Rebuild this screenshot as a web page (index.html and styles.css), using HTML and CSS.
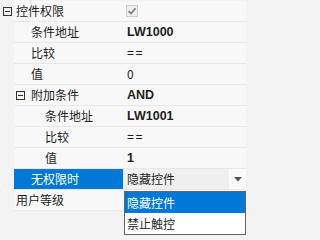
FILE: index.html
```html
<!DOCTYPE html>
<html>
<head>
<meta charset="utf-8">
<link rel="stylesheet" href="styles.css">
</head>
<body>
<div class="grid">
  <div class="row">
    <div class="gutter"><span class="tog"></span></div>
    <div class="name l0">控件权限</div>
    <div class="value"><span class="chk"><svg width="10" height="10" viewBox="0 0 10 10"><path d="M1.5 5.2 L4 7.6 L8.6 2.2" fill="none" stroke="#7a7a7a" stroke-width="1.6"/></svg></span></div>
  </div>
  <div class="row">
    <div class="gutter"></div>
    <div class="name l1">条件地址</div>
    <div class="value b">LW1000</div>
  </div>
  <div class="row">
    <div class="gutter"></div>
    <div class="name l1">比较</div>
    <div class="value eq">==</div>
  </div>
  <div class="row">
    <div class="gutter"></div>
    <div class="name l1">值</div>
    <div class="value">0</div>
  </div>
  <div class="row">
    <div class="gutter"></div>
    <div class="name l1t"><span class="tog"></span>附加条件</div>
    <div class="value b">AND</div>
  </div>
  <div class="row">
    <div class="gutter"></div>
    <div class="name l2">条件地址</div>
    <div class="value b">LW1001</div>
  </div>
  <div class="row">
    <div class="gutter"></div>
    <div class="name l2">比较</div>
    <div class="value eq">==</div>
  </div>
  <div class="row">
    <div class="gutter"></div>
    <div class="name l2">值</div>
    <div class="value b">1</div>
  </div>
  <div class="row">
    <div class="gutter"></div>
    <div class="name l1 sel">无权限时</div>
    <div class="value combo"><span class="ctext">隐藏控件</span><span class="cbtn"><svg width="8" height="5" viewBox="0 0 8 5"><path d="M0 0 H8 L4 4.5 Z" fill="#555"/></svg></span></div>
  </div>
  <div class="row">
    <div class="gutter"></div>
    <div class="name l0 top">用户等级</div>
    <div class="value"></div>
  </div>
</div>
<div class="drop">
  <div class="opt hi">隐藏控件</div>
  <div class="opt">禁止触控</div>
</div>
</body>
</html>
```
FILE: styles.css
```css
html, body {
  margin: 0;
  padding: 0;
  background: #f3f3f3;
  font-family: "Noto Sans CJK SC", "Microsoft YaHei", sans-serif;
  font-size: 12px;
  color: #1e1e1e;
}
body {
  width: 246px;
  height: 236px;
  overflow: hidden;
  position: relative;
}
.grid {
  display: flex;
  flex-direction: column;
  padding-top: 1px;
}
.row {
  display: flex;
  height: 20px;
  border-bottom: 1px solid #e8e8e8;
}
.gutter {
  width: 14px;
  flex: none;
  background: #f3f3f3;
  display: flex;
  align-items: center;
  padding-left: 3px;
  box-sizing: border-box;
  margin-bottom: -1px;
}
.name {
  width: 109px;
  flex: none;
  background: #f8f8f8;
  display: flex;
  align-items: center;
  box-sizing: border-box;
  line-height: 20px;
  white-space: nowrap;
}
.l0 { padding-left: 2px; }
.l1 { padding-left: 17px; }
.l1t { padding-left: 2px; }
.l1t .tog { margin-right: 6px; }
.l2 { padding-left: 31px; }
.sel {
  background: #0078d7;
  color: #fff;
}
.value {
  flex: 1;
  background: #f8f8f8;
  display: flex;
  align-items: center;
  padding-left: 4px;
  line-height: 20px;
  white-space: nowrap;
}
.b { font-weight: bold; font-family: "Liberation Sans", Arial, sans-serif; font-size: 12.5px; }
.eq { letter-spacing: 1.5px; font-family: "Liberation Sans", Arial, sans-serif; }
.tog {
  width: 9px;
  height: 9px;
  box-sizing: border-box;
  border: 1px solid #333;
  position: relative;
  flex: none;
}
.tog::after {
  content: "";
  position: absolute;
  left: 1px;
  right: 1px;
  top: 3px;
  height: 1px;
  background: #333;
}
.chk {
  width: 12px;
  height: 12px;
  box-sizing: border-box;
  border: 1px solid #cdcdcd;
  background: #f0f0f0;
  display: flex;
  align-items: center;
  justify-content: center;
  margin-left: -1px;
}
.combo {
  background: #f0f0f0;
  padding-right: 0;
}
.ctext { flex: 1; }
.cbtn {
  width: 17px;
  height: 20px;
  background: #fafafa;
  display: flex;
  align-items: center;
  justify-content: center;
}
.drop {
  position: absolute;
  left: 124px;
  top: 191px;
  width: 122px;
  height: 44px;
  box-sizing: border-box;
  border: 1px solid #646464;
  background: #fff;
}
.opt {
  height: 21px;
  line-height: 21px;
  padding-left: 2px;
}
.hi {
  background: #0078d7;
  color: #fff;
}
```
